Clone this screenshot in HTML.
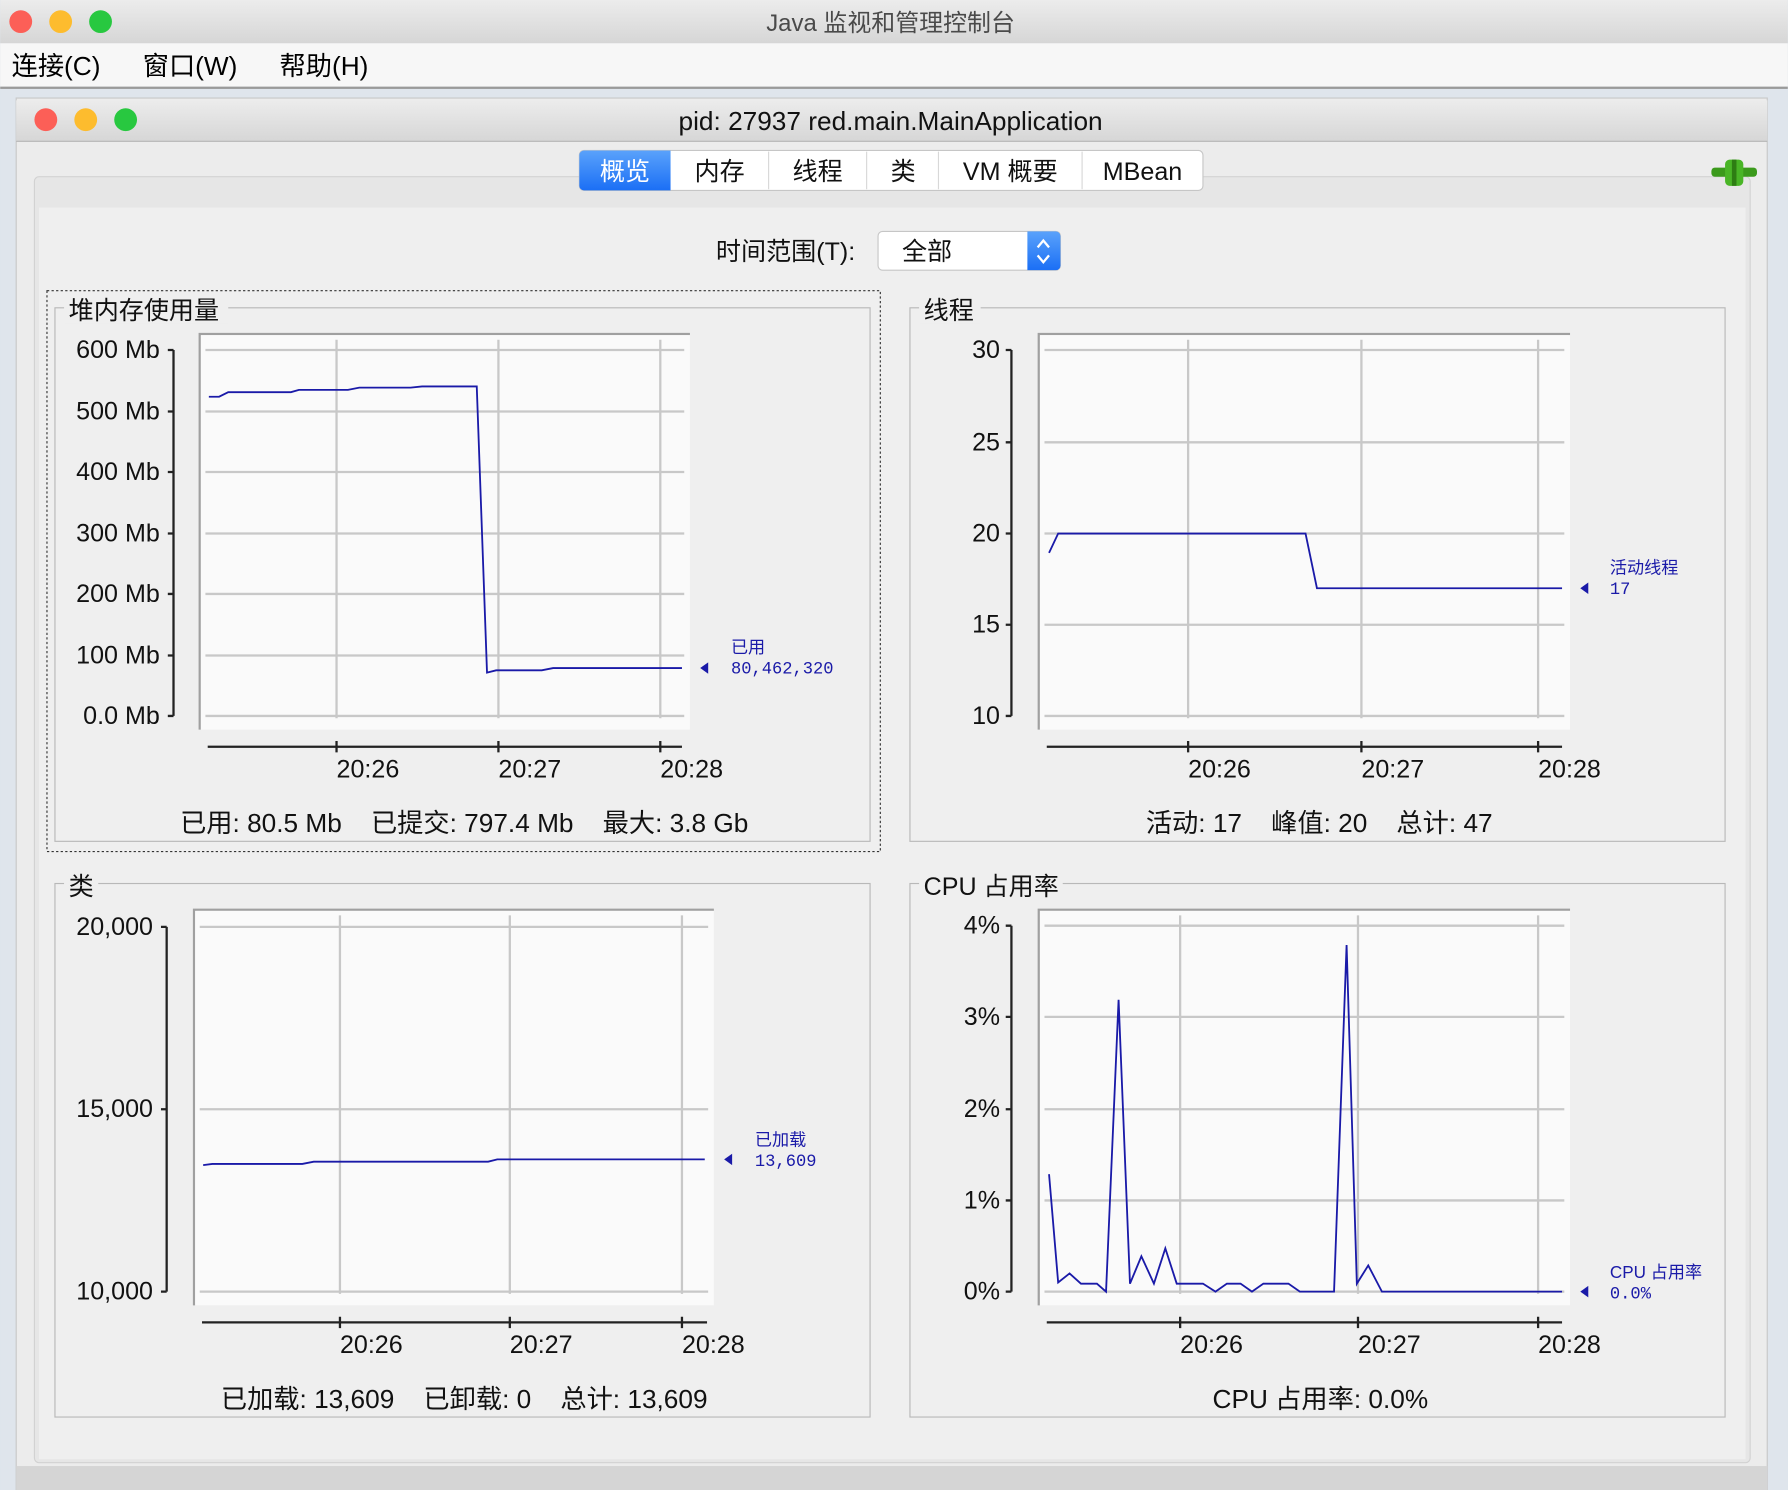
<!DOCTYPE html>
<html><head><meta charset="utf-8"><style>
html,body{margin:0;padding:0;background:#dfe5ec;}
svg{display:block}
text{font-family:"Liberation Sans","Noto Sans CJK SC",sans-serif;}
.mono{font-family:"Liberation Mono","DejaVu Sans Mono",monospace;}
</style></head><body>
<svg width="1788" height="1490" viewBox="0 0 1568 1307" xmlns="http://www.w3.org/2000/svg">
<defs>
<linearGradient id="tb" x1="0" y1="0" x2="0" y2="1"><stop offset="0" stop-color="#ececec"/><stop offset="1" stop-color="#d6d6d6"/></linearGradient>
<linearGradient id="blue" x1="0" y1="0" x2="0" y2="1"><stop offset="0" stop-color="#5aa2fb"/><stop offset="1" stop-color="#1b6ff5"/></linearGradient>
</defs>
<rect width="1568" height="1307" fill="#dfe5ec"/>
<rect x="0" y="0" width="1568" height="38" fill="url(#tb)"/>
<circle cx="18" cy="19" r="10" fill="#fc5f57"/><circle cx="53" cy="19" r="10" fill="#fdbc2e"/><circle cx="88" cy="19" r="10" fill="#28c840"/>
<text x="781" y="27" font-size="21" text-anchor="middle" fill="#4a4a4a">Java 监视和管理控制台</text>
<rect x="0" y="38" width="1568" height="38" fill="#f7f7f7"/>
<rect x="0" y="76" width="1568" height="2" fill="#9a9a9a"/>
<text x="10" y="66" font-size="23" fill="#000">连接(C)</text>
<text x="125" y="66" font-size="23" fill="#000">窗口(W)</text>
<text x="245" y="66" font-size="23" fill="#000">帮助(H)</text>
<rect x="14" y="86" width="1536" height="1221" fill="#ececec" stroke="#c8c8c8"/>
<rect x="14" y="88" width="1536" height="36" fill="url(#tb)"/>
<line x1="14" y1="124" x2="1550" y2="124" stroke="#b5b5b5"/>
<circle cx="40" cy="105" r="10" fill="#fc5f57"/><circle cx="75" cy="105" r="10" fill="#fdbc2e"/><circle cx="110" cy="105" r="10" fill="#28c840"/>
<text x="781" y="114" font-size="23" text-anchor="middle" fill="#111">pid: 27937 red.main.MainApplication</text>
<rect x="14" y="1286" width="1536" height="21" fill="#d5d5d5"/>
<rect x="30" y="155" width="1505" height="1128" rx="4" fill="#e6e6e6" stroke="#d2d2d2"/>
<rect x="34" y="182" width="1497" height="1098" fill="#efefef"/>
<rect x="508" y="132" width="547" height="35" rx="4" fill="#fff" stroke="#c6c6c6"/>
<path d="M512 132 H588 V167 H512 A4 4 0 0 1 508 163 V136 A4 4 0 0 1 512 132Z" fill="url(#blue)"/>
<g stroke="#d8d8d8"><line x1="674" y1="133" x2="674" y2="166"/><line x1="760" y1="133" x2="760" y2="166"/><line x1="823" y1="133" x2="823" y2="166"/><line x1="949" y1="133" x2="949" y2="166"/></g>
<g font-size="22" text-anchor="middle" fill="#111">
<text x="548" y="158" fill="#fff">概览</text><text x="631" y="158">内存</text><text x="717" y="158">线程</text><text x="792" y="158">类</text><text x="886" y="158">VM 概要</text><text x="1002" y="158">MBean</text></g>
<g><rect x="1501" y="147" width="40" height="8" rx="3" fill="#3b9a1c"/><rect x="1513" y="140" width="16" height="23" rx="4" fill="#49b526"/><rect x="1519" y="140" width="4" height="23" fill="#2e7d13"/></g>
<text x="750" y="228" font-size="22" text-anchor="end" fill="#111">时间范围(T):</text>
<rect x="770" y="203" width="160" height="34" rx="4" fill="#fff" stroke="#c6c6c6"/>
<path d="M901 203 H926 A4 4 0 0 1 930 207 V233 A4 4 0 0 1 926 237 H901Z" fill="url(#blue)"/>
<path d="M910 217 L915 211 L920 217 M910 224 L915 230 L920 224" stroke="#fff" stroke-width="2" fill="none"/>
<text x="791" y="228" font-size="22" fill="#111">全部</text>

<rect x="41" y="255" width="731" height="492" fill="none" stroke="#333" stroke-dasharray="2 2"/>
<g fill="none" stroke="#b8b8b8">
<rect x="48" y="270" width="715" height="468"/><rect x="798" y="270" width="715" height="468"/>
<rect x="48" y="775" width="715" height="468"/><rect x="798" y="775" width="715" height="468"/></g>
<g font-size="22" fill="#111">
<rect x="56" y="258" width="144" height="26" fill="#efefef"/><text x="60" y="280">堆内存使用量</text>
<rect x="806" y="258" width="54" height="26" fill="#efefef"/><text x="810" y="280">线程</text>
<rect x="56" y="763" width="30" height="26" fill="#efefef"/><text x="60" y="785">类</text>
<rect x="806" y="763" width="126" height="26" fill="#efefef"/><text x="810" y="785">CPU 占用率</text>
</g>

<g fill="#fafafa" stroke="#a0a0a0" stroke-width="2">
<path d="M175 640 V293 H605"/><path d="M911 640 V293 H1377"/><path d="M170 1145 V798 H626"/><path d="M911 1145 V798 H1377"/></g>
<g fill="#fafafa"><rect x="176" y="294" width="429" height="346"/><rect x="912" y="294" width="465" height="346"/><rect x="171" y="799" width="455" height="346"/><rect x="912" y="799" width="465" height="346"/></g>
<g stroke="#c8c8c8" stroke-width="2">
<line x1="180" y1="307" x2="600" y2="307"/><line x1="180" y1="361" x2="600" y2="361"/><line x1="180" y1="414" x2="600" y2="414"/><line x1="180" y1="468" x2="600" y2="468"/><line x1="180" y1="521" x2="600" y2="521"/><line x1="180" y1="575" x2="600" y2="575"/><line x1="180" y1="628" x2="600" y2="628"/>
<line x1="295" y1="298" x2="295" y2="630"/><line x1="437" y1="298" x2="437" y2="630"/><line x1="579" y1="298" x2="579" y2="630"/>
<line x1="916" y1="307" x2="1372" y2="307"/><line x1="916" y1="388" x2="1372" y2="388"/><line x1="916" y1="468" x2="1372" y2="468"/><line x1="916" y1="548" x2="1372" y2="548"/><line x1="916" y1="628" x2="1372" y2="628"/>
<line x1="1042" y1="298" x2="1042" y2="630"/><line x1="1194" y1="298" x2="1194" y2="630"/><line x1="1349" y1="298" x2="1349" y2="630"/>
<line x1="175" y1="813" x2="621" y2="813"/><line x1="175" y1="973" x2="621" y2="973"/><line x1="175" y1="1133" x2="621" y2="1133"/>
<line x1="298" y1="803" x2="298" y2="1135"/><line x1="447" y1="803" x2="447" y2="1135"/><line x1="598" y1="803" x2="598" y2="1135"/>
<line x1="916" y1="812" x2="1372" y2="812"/><line x1="916" y1="892" x2="1372" y2="892"/><line x1="916" y1="973" x2="1372" y2="973"/><line x1="916" y1="1053" x2="1372" y2="1053"/><line x1="916" y1="1133" x2="1372" y2="1133"/>
<line x1="1035" y1="803" x2="1035" y2="1135"/><line x1="1191" y1="803" x2="1191" y2="1135"/><line x1="1349" y1="803" x2="1349" y2="1135"/>
</g>
<g stroke="#222" stroke-width="2" fill="none">
<path d="M152 307 V628 M147 307 H152 M147 361 H152 M147 414 H152 M147 468 H152 M147 521 H152 M147 575 H152 M147 628 H152"/>
<path d="M182 655 H598 M295 650 V660 M437 650 V660 M579 650 V660"/>
<path d="M887 307 V628 M882 307 H887 M882 388 H887 M882 468 H887 M882 548 H887 M882 628 H887"/>
<path d="M918 655 H1370 M1042 650 V660 M1194 650 V660 M1349 650 V660"/>
<path d="M146 813 V1133 M141 813 H146 M141 973 H146 M141 1133 H146"/>
<path d="M177 1160 H620 M298 1155 V1165 M447 1155 V1165 M598 1155 V1165"/>
<path d="M887 812 V1133 M882 812 H887 M882 892 H887 M882 973 H887 M882 1053 H887 M882 1133 H887"/>
<path d="M918 1160 H1370 M1035 1155 V1165 M1191 1155 V1165 M1349 1155 V1165"/>
</g>
<g font-size="22" fill="#111" text-anchor="end">
<text x="140" y="314">600 Mb</text><text x="140" y="368">500 Mb</text><text x="140" y="421">400 Mb</text><text x="140" y="475">300 Mb</text><text x="140" y="528">200 Mb</text><text x="140" y="582">100 Mb</text><text x="140" y="635">0.0 Mb</text>
<text x="877" y="314">30</text><text x="877" y="395">25</text><text x="877" y="475">20</text><text x="877" y="555">15</text><text x="877" y="635">10</text>
<text x="134" y="820">20,000</text><text x="134" y="980">15,000</text><text x="134" y="1140">10,000</text>
<text x="877" y="819">4%</text><text x="877" y="899">3%</text><text x="877" y="980">2%</text><text x="877" y="1060">1%</text><text x="877" y="1140">0%</text>
</g>
<g font-size="22" fill="#111">
<text x="295" y="682">20:26</text><text x="437" y="682">20:27</text><text x="579" y="682">20:28</text>
<text x="1042" y="682">20:26</text><text x="1194" y="682">20:27</text><text x="1349" y="682">20:28</text>
<text x="298" y="1187">20:26</text><text x="447" y="1187">20:27</text><text x="598" y="1187">20:28</text>
<text x="1035" y="1187">20:26</text><text x="1191" y="1187">20:27</text><text x="1349" y="1187">20:28</text>
</g>
<g font-size="23" fill="#111" text-anchor="middle">
<text x="407" y="730" xml:space="preserve">已用: 80.5 Mb    已提交: 797.4 Mb    最大: 3.8 Gb</text>
<text x="1157" y="730" xml:space="preserve">活动: 17    峰值: 20    总计: 47</text>
<text x="407" y="1235" xml:space="preserve">已加载: 13,609    已卸载: 0    总计: 13,609</text>
<text x="1158" y="1235">CPU 占用率: 0.0%</text>
</g>
<g stroke="#1a1aa8" stroke-width="1.6" fill="none">
<polyline points="183,348 192,348 200,344 255,344 262,342 305,342 315,340 360,340 370,339 418,339 427,590 435,588 475,588 485,586 598,586"/>
<polyline points="920,485 928,468 1145,468 1155,516 1370,516"/>
<polyline points="178,1022 186,1021 265,1021 275,1019 428,1019 436,1017 618,1017"/>
<polyline points="920,1030 928,1125 938,1117 948,1126 962,1126 970,1133 981,877 991,1126 1001,1102 1012,1126 1022,1095 1032,1126 1055,1126 1066,1133 1076,1126 1088,1126 1098,1133 1108,1126 1130,1126 1140,1133 1170,1133 1181,829 1190,1126 1200,1110 1212,1133 1370,1133"/>
</g>
<g fill="#1a1aa8">
<path d="M614 586 L621 581 L621 591Z"/><path d="M1386 516 L1393 511 L1393 521Z"/><path d="M635 1017 L642 1012 L642 1022Z"/><path d="M1386 1133 L1393 1128 L1393 1138Z"/>
<g font-size="15"><text x="641" y="573">已用</text><text x="641" y="591" class="mono">80,462,320</text>
<text x="1412" y="503">活动线程</text><text x="1412" y="521" class="mono">17</text>
<text x="662" y="1005">已加载</text><text x="662" y="1023" class="mono">13,609</text>
<text x="1412" y="1121">CPU 占用率</text><text x="1412" y="1139" class="mono">0.0%</text></g>
</g>
</svg>
</body></html>
